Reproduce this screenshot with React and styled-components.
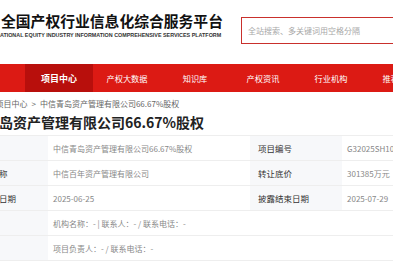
import React from 'react';
import styled, { createGlobalStyle } from 'styled-components';

const GlobalStyle = createGlobalStyle`
  body {
    margin: 0;
    overflow: hidden;
    background: #fff;
    font-family: "Noto Sans CJK SC", "Liberation Sans", sans-serif;
  }
`;

// whole page is wider than the window, shifted a bit to the left
const Page = styled.div`
  width: 1200px;
  margin-left: -43px;
`;

const Header = styled.header`
  height: 64px;
  display: flex;
  align-items: flex-start;
  box-sizing: border-box;
  padding-top: 11px;
`;

const Logo = styled.div`
  width: 40px;
  height: 32px;
  margin-right: 4px;
  flex-shrink: 0;
`;

const Brand = styled.div`
  width: 222px;
  display: flex;
  flex-direction: column;
`;

const BrandName = styled.div`
  font-size: 14.8px;
  font-weight: 700;
  line-height: 20px;
  color: #111;
  white-space: nowrap;
`;

const BrandEn = styled.div`
  margin-left: -5px;
  font-family: "Liberation Sans", sans-serif;
  font-size: 5.4px;
  font-weight: 700;
  line-height: 9px;
  color: #333;
  white-space: nowrap;
`;

const Search = styled.div`
  margin-left: 18px;
  margin-top: 6px;
  width: 320px;
  height: 27px;
  box-sizing: border-box;
  border: 1.5px solid #c9302c;
  display: flex;
  align-items: center;
  padding-left: 6px;
  font-size: 8px;
  color: #a8a8a8;
`;

const Nav = styled.nav`
  height: 28px;
  background: #dc1a14;
  display: flex;
`;

const NavItem = styled.a`
  width: 68px;
  flex-shrink: 0;
  display: flex;
  align-items: center;
  justify-content: center;
  font-size: ${(p) => (p.active ? '9px' : '8.2px')};
  font-weight: ${(p) => (p.active ? 700 : 400)};
  color: #fff;
  background: ${(p) => (p.active ? '#b80f0c' : 'transparent')};
  white-space: nowrap;
`;

const Crumb = styled.div`
  padding: 5px 0 0 10px;
  height: 13px;
  line-height: 13px;
  font-size: 8px;
  color: #666;
  white-space: nowrap;
  span {
    margin: 0 4px;
  }
`;

const Title = styled.h1`
  margin: 2px 0 0;
  font-size: 14px;
  line-height: 20px;
  font-weight: 700;
  color: #222;
  white-space: nowrap;
`;

const Table = styled.table`
  margin-top: 3px;
  width: 800px;
  border-collapse: collapse;
  table-layout: fixed;
  border-top: 1px solid #eee;
`;

const Row = styled.tr`
  height: 25px;
  border-bottom: 1px solid #eee;
`;

const Label = styled.td`
  background: #f7f8fa;
  padding: 0 0 0 8px;
  font-size: 8.5px;
  color: #333;
  white-space: nowrap;
  overflow: hidden;
`;

const Value = styled.td`
  background: #fff;
  padding: 0 0 0 5px;
  font-size: 8px;
  color: #888;
  white-space: nowrap;
  overflow: hidden;
`;

const navs = ['首页', '项目中心', '产权大数据', '知识库', '产权资讯', '行业机构', '推荐机构'];

export default function App() {
  return (
    <>
      <GlobalStyle />
      <Page>
        <Header>
          <Logo>
            <svg width="40" height="32" viewBox="0 0 40 32">
              <circle cx="20" cy="16" r="14" fill="#d7261e" />
            </svg>
          </Logo>
          <Brand>
            <BrandName>全国产权行业信息化综合服务平台</BrandName>
            <BrandEn>NATIONAL EQUITY INDUSTRY INFORMATION COMPREHENSIVE SERVICES PLATFORM</BrandEn>
          </Brand>
          <Search>全站搜索、多关键词用空格分隔</Search>
        </Header>

        <Nav>
          {navs.map((n) => (
            <NavItem key={n} active={n === '项目中心' ? 1 : 0}>
              {n}
            </NavItem>
          ))}
        </Nav>

        <Crumb>
          首页<span>&gt;</span>项目中心<span>&gt;</span>中信青岛资产管理有限公司66.67%股权
        </Crumb>

        <Title>中信青岛资产管理有限公司66.67%股权</Title>

        <Table>
          <colgroup>
            <col style={{ width: 91 }} />
            <col style={{ width: 202 }} />
            <col style={{ width: 92 }} />
            <col />
          </colgroup>
          <tbody>
            <Row>
              <Label>项目名称</Label>
              <Value>中信青岛资产管理有限公司66.67%股权</Value>
              <Label>项目编号</Label>
              <Value>G32025SH1000123</Value>
            </Row>
            <Row>
              <Label>转让方名称</Label>
              <Value>中信百年资产管理有限公司</Value>
              <Label>转让底价</Label>
              <Value>301385万元</Value>
            </Row>
            <Row>
              <Label>挂牌开始日期</Label>
              <Value>2025-06-25</Value>
              <Label>披露结束日期</Label>
              <Value>2025-07-29</Value>
            </Row>
            <Row>
              <Label>交易机构</Label>
              <Value colSpan={3}>机构名称：- | 联系人：- / 联系电话：-</Value>
            </Row>
            <Row>
              <Label>联系方式</Label>
              <Value colSpan={3}>项目负责人：- / 联系电话：-</Value>
            </Row>
          </tbody>
        </Table>
      </Page>
    </>
  );
}
